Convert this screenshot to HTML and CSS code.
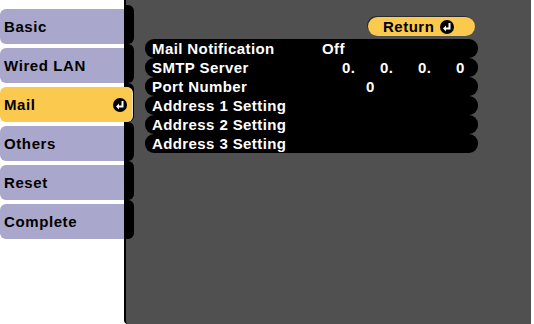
FILE: index.html
```html
<!DOCTYPE html>
<html lang="en">
<head>
    <meta charset="UTF-8">
    <meta name="viewport" content="width=device-width, initial-scale=1.0">
    <title>Mail Settings</title>
    <link rel="stylesheet" href="styles.css">
</head>
<body>
    <div class="sidebar">
        <div class="tab">Basic</div>
        <div class="tab">Wired LAN</div>
        <div class="tab active">Mail
            <svg class="enter" width="14" height="14" viewBox="0 0 14 14">
                <circle cx="7" cy="7" r="7" fill="#000"/>
                <path d="M9.5 3 V8.5 H5" stroke="#fff" stroke-width="2" fill="none"/>
                <path d="M6 5.5 L3 8.5 L6 11.5 Z" fill="#fff"/>
            </svg>
        </div>
        <div class="tab">Others</div>
        <div class="tab">Reset</div>
        <div class="tab">Complete</div>
    </div>

    <div class="panel">
        <div class="caps">
            <span></span><span></span><span></span><span></span><span></span><span></span>
        </div>
        <div class="content">
            <div class="top-bar">
                <div class="return-btn">Return
                    <svg class="enter" width="14" height="14" viewBox="0 0 14 14">
                        <circle cx="7" cy="7" r="7" fill="#000"/>
                        <path d="M9.5 3 V8.5 H5" stroke="#fff" stroke-width="2" fill="none"/>
                        <path d="M6 5.5 L3 8.5 L6 11.5 Z" fill="#fff"/>
                    </svg>
                </div>
            </div>
            <div class="settings">
                <div class="row"><span class="label">Mail Notification</span><span class="value">Off</span></div>
                <div class="row"><span class="label">SMTP Server</span>
                    <span class="value ip"><span>0.</span><span>0.</span><span>0.</span><span>0</span></span>
                </div>
                <div class="row"><span class="label">Port Number</span><span class="value port">0</span></div>
                <div class="row"><span class="label">Address 1 Setting</span></div>
                <div class="row"><span class="label">Address 2 Setting</span></div>
                <div class="row"><span class="label">Address 3 Setting</span></div>
            </div>
        </div>
    </div>
</body>
</html>
```

FILE: styles.css
```css
body {
    margin: 0;
    height: 324px;
    display: flex;
    background-color: #ffffff;
    font-family: 'Liberation Sans', Arial, sans-serif;
    font-size: 15px;
    font-weight: bold;
    overflow: hidden;
}
.sidebar {
    width: 124px;
    flex-shrink: 0;
    padding-top: 9px;
    display: flex;
    flex-direction: column;
    gap: 4px;
    position: relative;
    z-index: 1;
}
.tab {
    height: 35px;
    line-height: 35px;
    padding-left: 4px;
    background-color: #a9a7cb;
    color: #000;
    letter-spacing: 0.6px;
    border-radius: 6px 0 0 6px;
    display: flex;
    align-items: center;
    justify-content: space-between;
}
.tab.active {
    background-color: #fcc94f;
    margin-right: -8px;
    padding-right: 5px;
    border-radius: 6px;
    box-shadow: 1px 0 0 #e8e0c8;
}
.panel {
    flex: 1;
    min-width: 0;
    margin-right: 3px;
    background-color: #505050;
    border-left: 2px solid #000;
    border-radius: 0 0 0 4px;
    display: flex;
}
.caps {
    width: 8px;
    padding-top: 5px;
    display: flex;
    flex-direction: column;
}
.caps span {
    height: 39px;
    background-color: #000;
    border-radius: 0 6px 6px 0;
}
.content {
    flex: 1;
    min-width: 0;
    padding-top: 17px;
}
.top-bar {
    display: flex;
    justify-content: flex-end;
    margin-right: 56px;
}
.return-btn {
    width: 107px;
    height: 19px;
    box-sizing: border-box;
    padding-left: 15px;
    padding-right: 21px;
    border-radius: 10px;
    background-color: #fcc94f;
    box-shadow: -1px -1px 0 #2a2a2a;
    color: #000;
    letter-spacing: 0.5px;
    display: flex;
    align-items: center;
    justify-content: space-between;
}
.settings {
    margin: 3px 53px 0 11px;
}
.row {
    height: 19px;
    line-height: 19px;
    background-color: #000;
    border-radius: 9px;
    color: #fff;
    padding-left: 7px;
    display: flex;
    letter-spacing: 0.4px;
}
.label {
    width: 170px;
}
.ip {
    padding-left: 20px;
    display: flex;
}
.ip span {
    width: 38px;
}
.ip span:last-child {
    width: auto;
}
.port {
    padding-left: 44px;
}
```
